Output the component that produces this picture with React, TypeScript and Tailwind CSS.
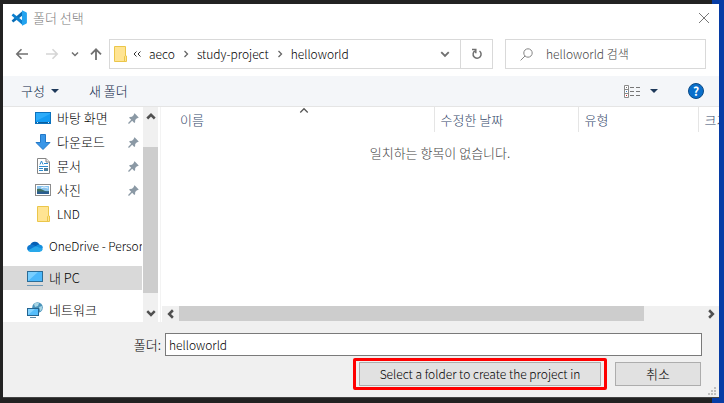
import type { ReactNode } from 'react'

type Place = {
  label: string
  icon: ReactNode
  pinned?: boolean
  nested?: boolean
  selected?: boolean
  spaced?: boolean
}

function VsCodeIcon() {
  return (
    <svg viewBox="0 0 16 16" className="size-4 shrink-0" aria-hidden="true">
      <path d="M11.5 1 .6 10.6 2.2 12.4 11.5 5.6Z" fill="#0a6db5" />
      <path d="M11.5 15 .6 5.4 2.2 3.6 11.5 10.4Z" fill="#0b7fcf" />
      <path d="M11 .2 15.2 2.2Q15.9 2.5 15.9 3.2V12.8Q15.9 13.5 15.2 13.8L11 15.8Z" fill="#23a3ef" />
    </svg>
  )
}

function FolderIcon() {
  return (
    <svg viewBox="0 0 13 16" className="h-4 w-[13px] shrink-0" aria-hidden="true">
      <path d="M.5.5H11.5V10H12.5V15.5H.5Z" fill="#ffe492" stroke="#ebc64a" />
      <path d="M10.5 15.5V10.5L11.5 9.5" fill="none" stroke="#ebc64a" />
    </svg>
  )
}

function DesktopIcon() {
  return (
    <svg viewBox="0 0 16 12" className="h-3 w-4" aria-hidden="true">
      <rect x=".5" y=".5" width="15" height="11" fill="#139bf3" stroke="#0b71bd" />
      <path d="M1 9 15 2V1H1Z" fill="#2cacfa" />
      <path d="M1 10.5H15" stroke="#0b5f9f" />
      <path d="M2 10.5H3M13 10.5H14" stroke="#d5efff" />
    </svg>
  )
}

function DownloadIcon() {
  return (
    <svg viewBox="0 0 16 16" className="size-4" aria-hidden="true">
      <path d="M5.5.5H10.5V8.5H15L8 15.5 1 8.5H5.5Z" fill="#3896e8" stroke="#2379c8" />
    </svg>
  )
}

function DocumentIcon() {
  return (
    <svg viewBox="0 0 13 16" className="h-4 w-[13px]" aria-hidden="true">
      <path d="M.5.5H9L12.5 4V15.5H.5Z" fill="#fff" stroke="#858585" />
      <path d="M9 .5V4H12.5" fill="#eee" stroke="#858585" />
      <path d="M3 6.5 4.5 3 6 6.5M7 5.5H11M2 8.5H11M2 10.5H6M2 12.5H6" fill="none" stroke="#2e8bcd" />
      <rect x="7" y="10" width="4" height="3" fill="#4d7f9b" />
    </svg>
  )
}

function PictureIcon() {
  return (
    <svg viewBox="0 0 16 12" className="h-3 w-4" aria-hidden="true">
      <rect x=".5" y=".5" width="15" height="11" fill="#fff" stroke="#8c8c8c" />
      <rect x="2" y="2" width="12" height="8" fill="#8ac4ee" />
      <path d="M2 5Q5 4 8 6T14 7V8H2Z" fill="#3f7060" />
      <path d="M2 7.5H14V10H2Z" fill="#2a5c8f" />
      <path d="M6 4 9 3 13 4" stroke="#e8f6ff" fill="none" />
    </svg>
  )
}

function OneDriveIcon() {
  return (
    <svg viewBox="0 0 16 11" className="h-[11px] w-4" aria-hidden="true">
      <path d="M3.2 4.2A5 5 0 0 1 12.5 3.6L10 7 2.5 5Z" fill="#0660b5" />
      <path d="M3.4 3.8Q5.5 3.2 7.5 4.6L10 6 3 10Q.2 9.8.1 7.2.2 4.4 3.4 3.8Z" fill="#0f78d0" />
      <path d="M12.3 3.6Q15.8 4 15.9 7.2L14 8.5 8.5 5.4Q10 3.6 12.3 3.6Z" fill="#1490df" />
      <path d="M8.5 5.2 15.8 8Q15.3 10.8 12.5 11H3.3Q1.6 10.8.8 9.4Z" fill="#28a8ea" />
    </svg>
  )
}

function PcIcon() {
  return (
    <svg viewBox="0 0 16 15" className="h-[15px] w-4" aria-hidden="true">
      <rect x=".5" y=".5" width="15" height="10" fill="#4bb8fb" stroke="#2c6c96" />
      <path d="M1 10 11 1H1Z" fill="#79cfff" />
      <path d="M0 14.5H16" stroke="#6f98b5" />
    </svg>
  )
}

function NetworkIcon() {
  return (
    <svg viewBox="0 0 16 16" className="size-4" aria-hidden="true">
      <circle cx="10.5" cy="5.5" r="5.3" fill="#4a93ba" />
      <path d="M7 2Q9 0 12 1L11 4 8 5ZM12 5 15 4Q15.6 7 13.5 9.5Z" fill="#a9d6e5" />
      <rect x=".5" y="6.5" width="11" height="7" fill="#55bdfb" stroke="#24638f" />
      <path d="M1 13 8 7H1Z" fill="#83d3ff" />
      <path d="M3 15.5H9" stroke="#5b88a6" />
    </svg>
  )
}

function PinIcon() {
  return (
    <svg viewBox="0 0 11 11" className="size-[11px] shrink-0" aria-hidden="true">
      <path d="M6.6.3 10.7 4.4 9.8 5.2 9.2 5 7.2 7 7.1 9.2 6.3 9.9 4.2 7.8 1.2 10.7.3 10.7.3 9.8 3.2 6.8 1.1 4.7 1.8 3.9 4 3.8 6 1.8 5.8 1.2Z" fill="#8b99a5" />
    </svg>
  )
}

function Chevron({ d, className }: { d: string; className: string }) {
  return (
    <svg viewBox="0 0 8 8" className={className} fill="none" stroke="currentColor" aria-hidden="true">
      <path d={d} />
    </svg>
  )
}

const UP = 'M1 6 4 3 7 6'
const DOWN = 'M1 2.5 4 5.5 7 2.5'
const LEFT = 'M5.5 1 2.5 4 5.5 7'
const RIGHT = 'M2.5 1 5.5 4 2.5 7'

function Triangle() {
  return (
    <svg viewBox="0 0 8 4" className="h-1 w-2" aria-hidden="true">
      <path d="M0 0H8L4 4Z" fill="#1e395b" />
    </svg>
  )
}

const places: Place[] = [
  { label: '바탕 화면', icon: <DesktopIcon />, pinned: true, nested: true },
  { label: '다운로드', icon: <DownloadIcon />, pinned: true, nested: true },
  { label: '문서', icon: <DocumentIcon />, pinned: true, nested: true },
  { label: '사진', icon: <PictureIcon />, pinned: true, nested: true },
  { label: 'LND', icon: <FolderIcon />, nested: true },
  { label: 'OneDrive - Personal', icon: <OneDriveIcon />, spaced: true },
  { label: '내 PC', icon: <PcIcon />, selected: true, spaced: true },
  { label: '네트워크', icon: <NetworkIcon />, spaced: true },
]

const crumbs = ['aeco', 'study-project', 'helloworld']

function TitleBar() {
  return (
    <header className="flex h-7 items-center pr-[9px] pl-2">
      <VsCodeIcon />
      <h1 className="ml-1.5 flex-1 text-[13px] text-[#7c7c7c]">폴더 선택</h1>
      <button aria-label="닫기" className="text-[#777]">
        <svg viewBox="0 0 12 12" className="size-3" fill="none" stroke="currentColor">
          <path d="M1 1 11 11M11 1 1 11" />
        </svg>
      </button>
    </header>
  )
}

function NavBar() {
  return (
    <div className="flex items-center py-[7px] pr-[13px] pl-3">
      <nav className="flex w-[94px] shrink-0 items-center text-[#707070]">
        <button aria-label="뒤로">
          <svg viewBox="0 0 14 12" className="h-3 w-3.5" fill="none" stroke="currentColor" strokeWidth="1.6">
            <path d="M13 6H2M6.5 1.3 1.8 6 6.5 10.7" />
          </svg>
        </button>
        <button aria-label="앞으로" className="ml-4 text-[#d5d5d5]">
          <svg viewBox="0 0 14 12" className="h-3 w-3.5" fill="none" stroke="currentColor" strokeWidth="1.6">
            <path d="M1 6H12M7.5 1.3 12.2 6 7.5 10.7" />
          </svg>
        </button>
        <button aria-label="최근 위치" className="ml-3">
          <Chevron d={DOWN} className="size-2 stroke-[1.5]" />
        </button>
        <button aria-label="위로" className="ml-[11px]">
          <svg viewBox="0 0 12 12" className="size-3" fill="none" stroke="currentColor" strokeWidth="1.8">
            <path d="M6 12V1.5M1 6.3 6 1.3 11 6.3" />
          </svg>
        </button>
      </nav>

      <div className="flex h-[30px] min-w-0 flex-1 items-center border border-[#d9d9d9] pl-1">
        <FolderIcon />
        <button aria-label="이전 폴더" className="ml-1.5 flex text-[#333]">
          <Chevron d="M3.5 1.5 1 4 3.5 6.5M7.5 1.5 5 4 7.5 6.5" className="size-2" />
        </button>
        <ol className="flex flex-1 items-center pl-2">
          {crumbs.map((crumb, i) => (
            <li key={crumb} className="flex items-center">
              {i > 0 && <Chevron d={RIGHT} className="mx-[7px] size-2 stroke-[1.3] text-[#666]" />}
              <button className="whitespace-nowrap">{crumb}</button>
            </li>
          ))}
        </ol>
        <button aria-label="이전 위치" className="mr-2.5 text-[#707070]">
          <Chevron d={DOWN} className="size-2.5 stroke-[1.5]" />
        </button>
        <button aria-label="새로 고침" className="flex h-full w-8 items-center justify-center border-l border-[#d9d9d9] text-[#707070]">
          <svg viewBox="0 0 12 12" className="size-3" fill="none" stroke="currentColor" strokeWidth="1.5">
            <path d="M4 2.8A4 4 0 1 0 8.5 3" />
            <path d="M1 1.5H4.8V5.2" />
          </svg>
        </button>
      </div>

      <label className="ml-3 flex h-[30px] w-[201px] shrink-0 items-center border border-[#d9d9d9] pl-3.5">
        <svg viewBox="0 0 13 13" className="size-[13px] shrink-0" fill="none" stroke="#858585" aria-hidden="true">
          <circle cx="8" cy="5" r="4.2" />
          <path d="M5 8 .6 12.4" />
        </svg>
        <input
          type="search"
          aria-label="검색"
          placeholder="helloworld 검색"
          className="ml-[13px] w-full min-w-0 outline-none placeholder:text-[#444]"
        />
      </label>
    </div>
  )
}

function Toolbar() {
  return (
    <div className="flex h-[31px] items-center border-b border-[#e5e5e5] bg-[#f4f6f9] pr-[15px] pl-[18px] text-[13px] text-[#0c2748]">
      <button className="flex items-center gap-1.5">
        구성
        <Triangle />
      </button>
      <button className="ml-[30px]">새 폴더</button>
      <button aria-label="보기 변경" className="ml-auto flex items-center gap-2.5">
        <svg viewBox="0 0 16 13" className="h-[13px] w-4" fill="none" aria-hidden="true">
          <path d="M.5.5H4.5V12.5H.5ZM.5 4.5H4.5M.5 8.5H4.5" stroke="#8a8a8a" fill="#fff" />
          <path d="M6 2.5H10M12 2.5H16M6 6.5H10M12 6.5H16M6 10.5H10M12 10.5H16" stroke="#777" />
          <path d="M2 6.5H3" stroke="#3a7fd0" />
          <path d="M2 10.5H3" stroke="#d02020" />
          <path d="M2 2.5H3" stroke="#777" />
        </svg>
        <Triangle />
      </button>
      <button aria-label="도움말" className="ml-[30px] flex size-4 items-center justify-center rounded-full border border-[#0b4a86] bg-[#0a6fcb] text-xs font-bold text-white">
        ?
      </button>
    </div>
  )
}

function Sidebar() {
  return (
    <aside className="flex w-[158px] shrink-0 overflow-hidden border-r border-[#f3f3f3] pr-0.5">
      <ul className="-mt-px min-w-0 flex-1 overflow-hidden">
        {places.map((place) => (
          <li key={place.label} className={place.spaced ? 'mt-2' : ''}>
            <a
              href="#"
              className={[
                'flex h-6 items-center whitespace-nowrap',
                place.nested ? 'pl-8' : 'pl-6',
                place.selected ? 'bg-[#d9d9d9]' : '',
                /^[A-Z]/.test(place.label) ? '' : 'text-[13px]',
              ].join(' ')}
            >
              <span className="flex w-4 shrink-0 justify-center">{place.icon}</span>
              <span className={place.pinned ? 'ml-1.5 flex-1' : 'ml-1.5'}>{place.label}</span>
              {place.pinned && (
                <span className="mr-[3px]">
                  <PinIcon />
                </span>
              )}
            </a>
          </li>
        ))}
      </ul>
      <div className="ml-px flex w-[15px] shrink-0 flex-col items-center bg-[#f0f0f0] text-[#505050]">
        <button aria-label="위로 스크롤" className="flex h-10 items-start pt-1">
          <Chevron d={UP} className="size-2.5 stroke-2" />
        </button>
        <div className="w-full flex-1 bg-[#cdcdcd]" />
        <button aria-label="아래로 스크롤" className="flex h-[29px] items-end pb-1">
          <Chevron d={DOWN} className="size-2.5 stroke-2" />
        </button>
      </div>
    </aside>
  )
}

function FileList() {
  return (
    <section className="flex min-w-0 flex-1 flex-col overflow-hidden">
      <table className="w-full table-fixed border-collapse text-[13px]">
        <thead>
          <tr className="h-[25px] text-left whitespace-nowrap text-[#34486a]">
            <th className="relative w-[273px] border-r border-[#e5e5e5] pl-[19px] font-light">
              이름
              <Chevron d={UP} className="absolute top-[-2px] left-[138px] size-2.5 text-[#555]" />
            </th>
            <th className="w-36 border-r border-[#e5e5e5] pl-1.5 font-light">수정한 날짜</th>
            <th className="w-[120px] border-r border-[#e5e5e5] pl-1.5 font-light">유형</th>
            <th className="overflow-hidden pl-1.5 font-light">크기</th>
          </tr>
        </thead>
        <tbody>
          <tr>
            <td colSpan={4} className="pt-3 text-center text-[#444]">
              일치하는 항목이 없습니다.
            </td>
          </tr>
        </tbody>
      </table>
      <div className="mt-auto ml-px flex h-4 items-center bg-[#f0f0f0] pb-px text-[#505050]">
        <button aria-label="왼쪽으로 스크롤" className="flex w-[17px] justify-center">
          <Chevron d={LEFT} className="size-2.5 stroke-2" />
        </button>
        <div className="mr-[59px] h-full flex-1 bg-[#cdcdcd]" />
        <button aria-label="오른쪽으로 스크롤" className="flex w-4 justify-center">
          <Chevron d={RIGHT} className="size-2.5 stroke-2" />
        </button>
      </div>
    </section>
  )
}

function Footer() {
  return (
    <footer className="relative bg-[#f0f0f0] pt-[11px] pr-[17px] pb-[7px]">
      <div className="flex items-center">
        <label htmlFor="folder" className="w-[162px] shrink-0 pr-1 text-right text-[13px]">
          폴더:
        </label>
        <input
          id="folder"
          defaultValue="helloworld"
          className="h-[23px] w-full min-w-0 border border-[#7a7a7a] bg-white px-[3px] outline-none"
        />
      </div>
      <div className="mt-0.5 flex items-center justify-end gap-2 pr-px">
        <div className="rounded-xs border-3 border-[#ff0000] px-[3px] py-px">
          <button className="h-6 w-[242px] border border-[#adadad] bg-[#e1e1e1]">
            Select a folder to create the project in
          </button>
        </div>
        <button className="h-6 w-[86px] border border-[#adadad] bg-[#e1e1e1] text-[13px]">취소</button>
      </div>
      <svg viewBox="0 0 8 8" className="absolute right-[3px] bottom-0.5 size-2" aria-hidden="true">
        <path d="M6 0H8V2H6ZM3 3H5V5H3ZM6 3H8V5H6ZM0 6H2V8H0ZM3 6H5V8H3ZM6 6H8V8H6Z" fill="#bfbfbf" />
      </svg>
    </footer>
  )
}

export default function App() {
  return (
    <div className="min-h-screen bg-[linear-gradient(to_left,#063ca5_12px,#222_12px)] pt-1 pr-[5px] pl-[3px] font-['Noto_Sans_CJK_KR',sans-serif] text-xs font-light text-black">
      <main className="border-b border-[#444] bg-white">
        <TitleBar />
        <NavBar />
        <Toolbar />
        <div className="flex">
          <Sidebar />
          <FileList />
        </div>
        <Footer />
      </main>
    </div>
  )
}
